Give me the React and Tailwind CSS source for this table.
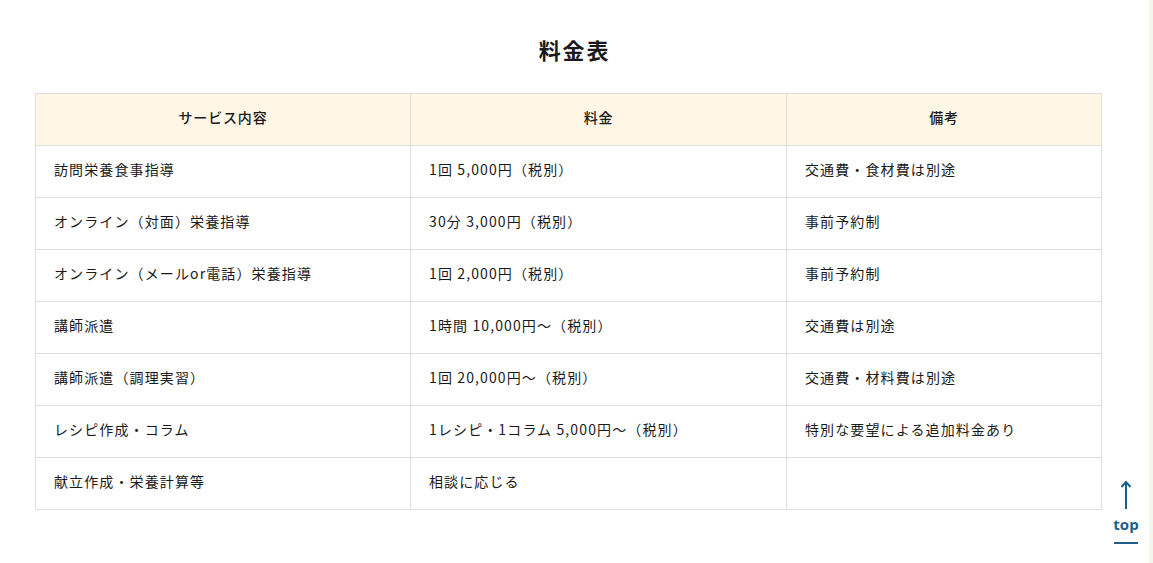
const ROWS = [
  ['訪問栄養食事指導', '1回 5,000円（税別）', '交通費・食材費は別途'],
  ['オンライン（対面）栄養指導', '30分 3,000円（税別）', '事前予約制'],
  ['オンライン（メールor電話）栄養指導', '1回 2,000円（税別）', '事前予約制'],
  ['講師派遣', '1時間 10,000円～（税別）', '交通費は別途'],
  ['講師派遣（調理実習）', '1回 20,000円～（税別）', '交通費・材料費は別途'],
  ['レシピ作成・コラム', '1レシピ・1コラム 5,000円～（税別）', '特別な要望による追加料金あり'],
  ['献立作成・栄養計算等', '相談に応じる', ''],
]

export default function App() {
  return (
    <div
      className="relative flex min-h-[563px] bg-white text-[#1a1a1a]"
      style={{ fontFamily: '"Noto Sans CJK JP", "Noto Sans", sans-serif' }}
    >
      <main className="flex-1 pt-[33px]">
        <h2 className="text-center text-[22px] font-bold leading-[32px] tracking-[0.08em]">料金表</h2>
        <table className="ml-[35px] mt-[28px] w-[1067px] border-collapse text-[14px] tracking-[0.08em]">
          <thead>
            <tr className="h-[52px] bg-[#fff6e5]">
              <th className="w-[375px] border border-[#dedede] pb-[4px] font-medium tracking-[0.06em]">サービス内容</th>
              <th className="w-[376px] border border-[#dedede] pb-[4px] font-medium tracking-[0.06em]">料金</th>
              <th className="border border-[#dedede] pb-[4px] font-medium tracking-[0.06em]">備考</th>
            </tr>
          </thead>
          <tbody>
            {ROWS.map((r, i) => (
              <tr key={i} className="h-[52px]">
                {r.map((c, j) => (
                  <td key={j} className="border border-[#dedede] pb-[5px] pl-[18px]">
                    {c}
                  </td>
                ))}
              </tr>
            ))}
          </tbody>
        </table>
      </main>
      <div className="w-[4px] bg-[#f1f7ea]" />
      <a
        href="#"
        className="absolute left-[1113px] top-[480px] flex w-[26px] flex-col items-center text-[#1d5f8a]"
      >
        <svg width="12" height="30" viewBox="0 0 12 30" fill="none" stroke="currentColor" strokeWidth="2">
          <path d="M6 29V2" />
          <path d="M1.5 7L6 2l4.5 5" />
        </svg>
        <span className="mt-[6px] text-[15px] font-bold leading-[16px]" style={{ fontFamily: '"Open Sans", sans-serif' }}>
          top
        </span>
        <span className="mt-[10px] h-[2px] w-[24px] bg-[#1d5f8a]" />
      </a>
    </div>
  )
}
